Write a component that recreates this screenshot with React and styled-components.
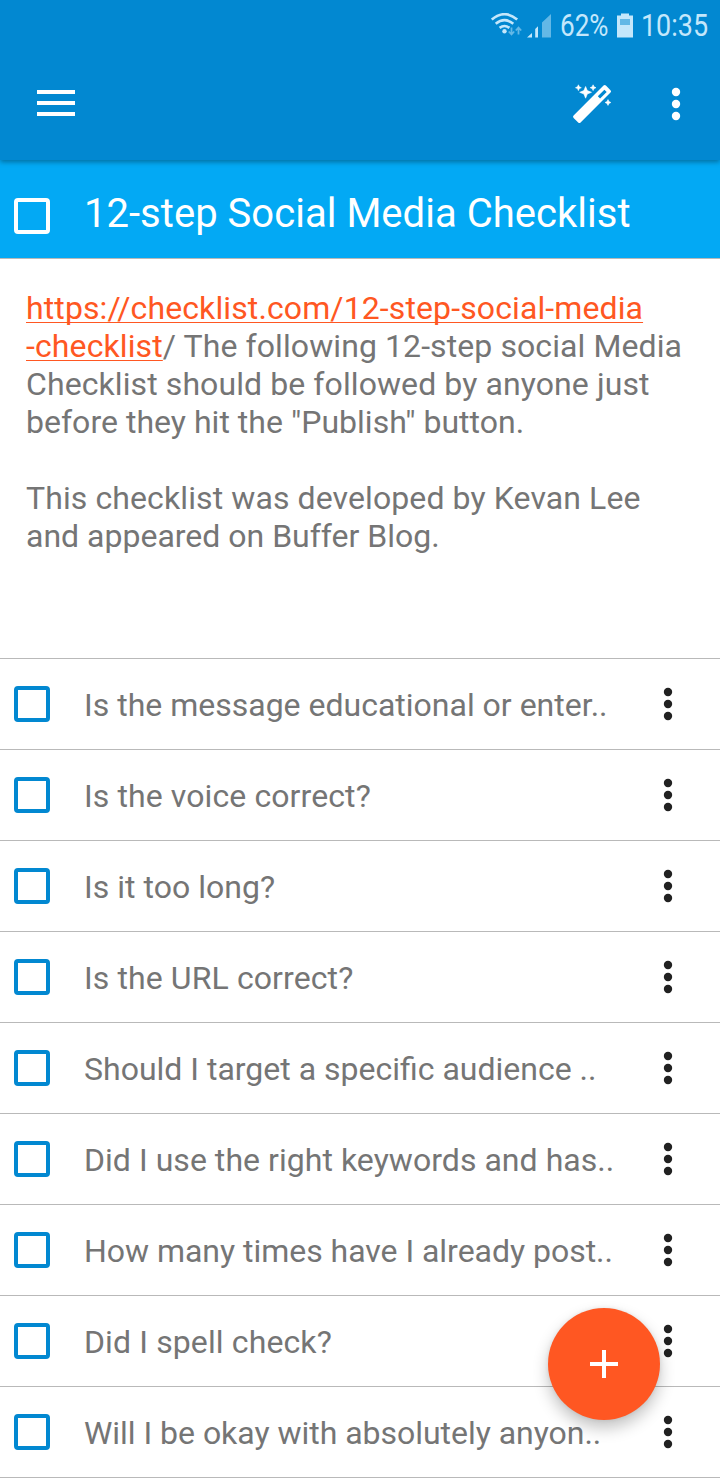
import React from 'react';
import styled, { createGlobalStyle, ThemeProvider } from 'styled-components';

const theme = {
  colors: {
    primary: '#0288d1',
    light: '#03a9f4',
    accent: '#ff5722',
    text: '#757575',
    dark: '#212121',
    line: '#b9b9b9',
    status: '#c4e7fb',
  },
  fonts: {
    primary: 'Roboto, "Liberation Sans", sans-serif',
  },
};

const tasks = [
  { text: 'Is the message educational or enter..', spacing: 0 },
  { text: 'Is the voice correct?', spacing: 0.1 },
  { text: 'Is it too long?', spacing: 0.03 },
  { text: 'Is the URL correct?', spacing: 0.1 },
  { text: 'Should I target a specific audience ..', spacing: 0 },
  { text: 'Did I use the right keywords and has..', spacing: 0.04 },
  { text: 'How many times have I already post..', spacing: -0.03 },
  { text: 'Did I spell check?', spacing: 0.12 },
  { text: 'Will I be okay with absolutely anyon..', spacing: -0.03 },
];

const GlobalStyle = createGlobalStyle`
  * {
    box-sizing: border-box;
  }
  body {
    margin: 0;
    background: #fff;
    font-family: ${({ theme }) => theme.fonts.primary};
  }
`

const Screen = styled.div`
  position: relative;
  display: flex;
  flex-direction: column;
  width: 720px;
  height: 1480px;
  overflow: hidden;
  background: #fff;
`

const Header = styled.header`
  position: relative;
  z-index: 1;
  display: flex;
  flex-direction: column;
  height: 160px;
  flex-shrink: 0;
  background: ${({ theme }) => theme.colors.primary};
  box-shadow: 0 2px 5px rgba(0, 0, 0, 0.35);
`

const StatusBar = styled.div`
  display: flex;
  justify-content: flex-end;
  align-items: center;
  height: 48px;
  padding: 3px 12px 0 0;
  color: ${({ theme }) => theme.colors.status};
`

const StatusText = styled.svg`
  display: block;
  height: 36px;
  width: ${({ $width }) => $width}px;
  margin-left: ${({ $left }) => $left}px;
  font-family: ${({ theme }) => theme.fonts.primary};
  font-size: 31px;
  fill: currentColor;
  overflow: visible;
`

const StatusIcon = styled.svg`
  display: block;
  margin-left: ${({ $left }) => $left || 0}px;
`

const Toolbar = styled.div`
  display: flex;
  align-items: center;
  height: 112px;
  padding: 0 20px 0 37px;
  color: #fff;
`

const IconButton = styled.button`
  display: flex;
  align-items: center;
  justify-content: center;
  width: ${({ $width }) => $width || 48}px;
  height: 48px;
  margin: 0;
  margin-left: ${({ $left }) => $left || 0};
  padding: 0;
  border: none;
  background: none;
  color: inherit;
  cursor: pointer;
`

const MenuButton = styled(IconButton)`
  margin-bottom: 2px;
`

const TitleBar = styled.div`
  display: flex;
  align-items: center;
  height: 99px;
  flex-shrink: 0;
  padding: 14px 14px 0;
  border-bottom: 1px solid ${({ theme }) => theme.colors.line};
  background: ${({ theme }) => theme.colors.light};
  color: #fff;
`

const Title = styled.h1`
  margin: 0 0 5px 34px;
  font-size: 40px;
  font-weight: 400;
  line-height: 48px;
  letter-spacing: 0.03px;
  white-space: nowrap;
`

const Checkbox = styled.span`
  width: 36px;
  height: 36px;
  flex-shrink: 0;
  border: 4px solid ${({ $color, theme }) => $color || theme.colors.primary};
  border-radius: 4px;
`

const Description = styled.div`
  height: 400px;
  flex-shrink: 0;
  padding: 30px 26px 0;
  border-bottom: 1px solid ${({ theme }) => theme.colors.line};
  color: ${({ theme }) => theme.colors.text};
  font-size: 32px;
  line-height: 38px;
`

const Text = styled.p`
  margin: 0 0 38px;
  white-space: nowrap;
`

const Line = styled.span`
  letter-spacing: ${({ $spacing }) => $spacing || 0}px;
`

const Link = styled.a`
  color: ${({ theme }) => theme.colors.accent};
  letter-spacing: 0.11px;
  text-decoration: underline;
  text-decoration-thickness: 1px;
  text-underline-offset: 3px;
  text-decoration-skip-ink: none;
`

const List = styled.ul`
  margin: 0;
  padding: 0;
  list-style: none;
`

const Row = styled.li`
  display: flex;
  align-items: center;
  height: 91px;
  padding: 0 28px 0 14px;
  border-bottom: 1px solid ${({ theme }) => theme.colors.line};
  color: ${({ theme }) => theme.colors.dark};
`

const RowText = styled.span`
  flex: 1;
  margin: 2px 0 0 34px;
  color: ${({ theme }) => theme.colors.text};
  font-size: 32px;
  line-height: 38px;
  letter-spacing: ${({ $spacing }) => $spacing}px;
  white-space: nowrap;
`

const Fab = styled.button`
  position: absolute;
  right: 60px;
  bottom: 60px;
  z-index: 2;
  display: flex;
  align-items: center;
  justify-content: center;
  width: 112px;
  height: 112px;
  padding: 0;
  border: none;
  border-radius: 50%;
  background: ${({ theme }) => theme.colors.accent};
  box-shadow: 0 8px 16px rgba(0, 0, 0, 0.24), 0 0 4px rgba(0, 0, 0, 0.08);
  cursor: pointer;
`

const Dots = () => (
  <svg width="10" height="34" viewBox="0 0 10 34" fill="currentColor">
    <circle cx="5" cy="5" r="4.2" />
    <circle cx="5" cy="17" r="4.2" />
    <circle cx="5" cy="29" r="4.2" />
  </svg>
)

const Wand = () => (
  <svg width="40" height="40" viewBox="-.8 -.8 40 40" fill="currentColor">
    <path
      fillRule="evenodd"
      d="M.8 30.700L30.700.8q1.200-1.200 2.400 0l4.600 4.600q1.200 1.200 0 2.400L7.800 37.700q-1.200 1.200-2.400 0l-4.600-4.600q-1.200-1.200 0-2.400zM25 11.400l2.300 2.300 6.600-6.500-2.300-2.300z"
    />
    <g stroke="currentColor" strokeWidth=".6" strokeLinejoin="round">
      <path d="M12.800 1.700l1.700 4.100 4.200 1.700-4.200 1.700-1.700 4.200-1.700-4.200-4.200-1.700 4.200-1.700z" />
      <path d="M5.600 0l.9 2 2 .9-2 .9-.9 2-.9-2-2-.9 2-.9z" />
      <path d="M20.300 0l.9 2 2 .9-2 .9-.9 2-.9-2-2-.9 2-.9z" />
      <path d="M35.200 14.800l.9 2 2 .9-2 .9-.9 2-.9-2-2-.9 2-.9z" />
    </g>
  </svg>
)

export default function App() {
  return (
    <ThemeProvider theme={theme}>
      <GlobalStyle />
      <Screen>
        <Header>
          <StatusBar>
            <StatusIcon width="32" height="26" viewBox="0 0 32 26" fill="none" stroke="currentColor" strokeWidth="2.6">
              <path d="M.8 6.600Q13.500-4.200 26.200 6.600M4.700 10.800q8.800-7.200 17.600 0M8.600 14.900q4.900-3.800 9.800 0" />
              <circle cx="13.500" cy="18.200" r="2.200" fill="currentColor" stroke="none" />
              <path d="M20.500 14.500v7M17.800 18.500l2.700 3 2.700-3M27.500 21.500v-7M24.800 17.500l2.700-3 2.700 3" strokeWidth="1.800" opacity=".5" />
            </StatusIcon>
            <StatusIcon $left={4} width="25" height="26" viewBox="0 0 25 26" fill="currentColor">
              <path d="M0 24.500l5-4.500v4.500zM8.200 16l2.800-2.700v11.200H8.200z" />
              <path d="M15 9.500L24 1v23.500h-9z" opacity=".5" />
            </StatusIcon>
            <StatusText $width={48} $left={8}>
              <text x="0" y="28" textLength="48.500" lengthAdjust="spacingAndGlyphs">62%</text>
            </StatusText>
            <StatusIcon $left={9} width="16" height="26" viewBox="0 0 16 26" fill="currentColor">
              <path d="M4 .5h8V3H4zM0 2.500h16V6H0zM0 6h3v6H0zM13 6h3v6h-3zM0 12h16v12.500H0z" />
              <path d="M3 6h10v6H3z" opacity=".5" />
            </StatusIcon>
            <StatusText $width={67} $left={8}>
              <text x="0" y="28" textLength="67" lengthAdjust="spacingAndGlyphs">10:35</text>
            </StatusText>
          </StatusBar>
          <Toolbar>
            <MenuButton $width={38}>
              <svg width="38" height="26" viewBox="0 0 38 26" fill="currentColor">
                <path d="M0 0h38v4H0zM0 11h38v4H0zM0 22h38v4H0z" />
              </svg>
            </MenuButton>
            <IconButton $left="auto">
              <Wand />
            </IconButton>
            <IconButton $left="36px">
              <Dots />
            </IconButton>
          </Toolbar>
        </Header>
        <TitleBar>
          <Checkbox $color="#fff" />
          <Title>12-step Social Media Checklist</Title>
        </TitleBar>
        <Description>
          <Text>
            <Link href="#">https://checklist.com/12-step-social-media<br />-checklist</Link>
            <Line $spacing={0.09}>/ The following 12-step social Media</Line><br />
            <Line $spacing={0.09}>Checklist should be followed by anyone just</Line><br />
            <Line $spacing={0.02}>before they hit the "Publish" button.</Line>
          </Text>
          <Text>
            <Line $spacing={0.1}>This checklist was developed by Kevan Lee</Line><br />
            <Line>and appeared on Buffer Blog.</Line>
          </Text>
        </Description>
        <List>
          {tasks.map((task) => (
            <Row key={task.text}>
              <Checkbox />
              <RowText $spacing={task.spacing}>{task.text}</RowText>
              <IconButton>
                <Dots />
              </IconButton>
            </Row>
          ))}
        </List>
        <Fab>
          <svg width="28" height="28" viewBox="0 0 28 28" fill="#fff">
            <path d="M12 0h4v12h12v4H16v12h-4V16H0v-4h12z" />
          </svg>
        </Fab>
      </Screen>
    </ThemeProvider>
  )
}
